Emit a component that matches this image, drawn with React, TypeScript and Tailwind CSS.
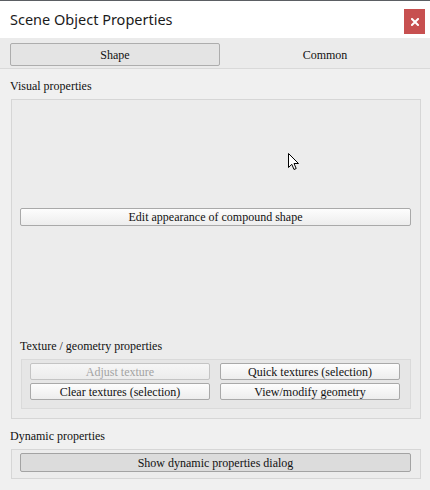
import React from "react";

const serif = { fontFamily: '"Liberation Serif", "Times New Roman", serif' };

function Btn({ children, disabled, className = "" }: { children: React.ReactNode; disabled?: boolean; className?: string }) {
  return (
    <div
      className={
        "flex items-center justify-center rounded-[2px] border text-[12px] leading-none " +
        (disabled
          ? "border-[#c4c4c4] bg-gradient-to-b from-[#f6f6f6] to-[#ececec] text-[#a3a3a3] "
          : "border-[#a9a9a9] bg-gradient-to-b from-[#fdfdfd] to-[#ededed] text-[#111] ") +
        className
      }
      style={serif}
    >
      {children}
    </div>
  );
}

export default function App() {
  return (
    <div className="relative w-[430px] h-[490px] bg-[#f0f0f0] overflow-hidden">
      <div className="h-[1px] bg-[#5b5e63]" />
      <div className="h-[37px] bg-white flex items-start justify-between pl-[10px] pr-[5px]">
        <div
          className="mt-[8px] text-[14.5px] leading-[20px] text-[#1b1b1b]"
          style={{ fontFamily: '"Noto Sans", "Open Sans", sans-serif' }}
        >
          Scene Object Properties
        </div>
        <div className="mt-[8px] w-[21px] h-[25px] bg-[#c75050] flex items-center justify-center">
          <svg width="8" height="8" viewBox="0 0 8 8">
            <path d="M1 1 L7 7 M7 1 L1 7" stroke="white" strokeWidth="2" strokeLinecap="square" />
          </svg>
        </div>
      </div>
      <div className="h-[31px] bg-[#ebebeb] border-b border-[#d9d9d9] flex pl-[10px] pt-[5px]">
        <div
          className="w-[210px] h-[23px] rounded-[2px] border border-[#adadad] bg-[#e4e4e4] flex items-center justify-center text-[12px] text-[#111]"
          style={serif}
        >
          Shape
        </div>
        <div className="flex-1 h-[23px] flex items-center justify-center text-[12px] text-[#111]" style={serif}>
          Common
        </div>
      </div>
      <div className="flex flex-col">
        <div className="mt-[9px] h-[16px] pl-[10px] flex items-center text-[12px] text-[#111]" style={serif}>
          Visual properties
        </div>
        <div className="mt-[5px] ml-[11px] w-[410px] h-[320px] border border-[#d6d6d6] bg-[#ececec] flex flex-col pl-[8px] pr-[9px]">
          <Btn className="mt-[108px] h-[18px]">Edit appearance of compound shape</Btn>
          <div className="mt-[112px] h-[16px] flex items-center text-[12px] text-[#111]" style={serif}>
            Texture / geometry properties
          </div>
          <div className="mt-[5px] ml-[1px] h-[50px] border border-[#dadada] bg-[#e6e6e6] pl-[8px] pr-[10px] pt-[3px] grid grid-cols-2 gap-x-[10px] gap-y-[3px] content-start">
            <Btn disabled className="h-[17px]">Adjust texture</Btn>
            <Btn className="h-[17px]">Quick textures (selection)</Btn>
            <Btn className="h-[17px]">Clear textures (selection)</Btn>
            <Btn className="h-[17px]">View/modify geometry</Btn>
          </div>
        </div>
        <div className="mt-[9px] h-[16px] pl-[10px] flex items-center text-[12px] text-[#111]" style={serif}>
          Dynamic properties
        </div>
        <div className="mt-[5px] ml-[11px] w-[410px] h-[30px] border border-[#d6d6d6] bg-[#ececec] pl-[8px] pr-[9px] pt-[3px]">
          <div
            className="h-[19px] rounded-[2px] border border-[#a3a3a3] bg-[#dcdcdc] flex items-center justify-center text-[12px] text-[#111]"
            style={serif}
          >
            Show dynamic properties dialog
          </div>
        </div>
      </div>
      <svg className="absolute left-[287px] top-[152px]" width="13" height="20" viewBox="0 0 13 20">
        <path
          d="M1.5 1.5 L1.5 15.5 L4.8 12.3 L7 17.5 L9.2 16.5 L7 11.5 L11.5 11.5 Z"
          fill="white"
          stroke="black"
          strokeWidth="1"
        />
      </svg>
    </div>
  );
}
